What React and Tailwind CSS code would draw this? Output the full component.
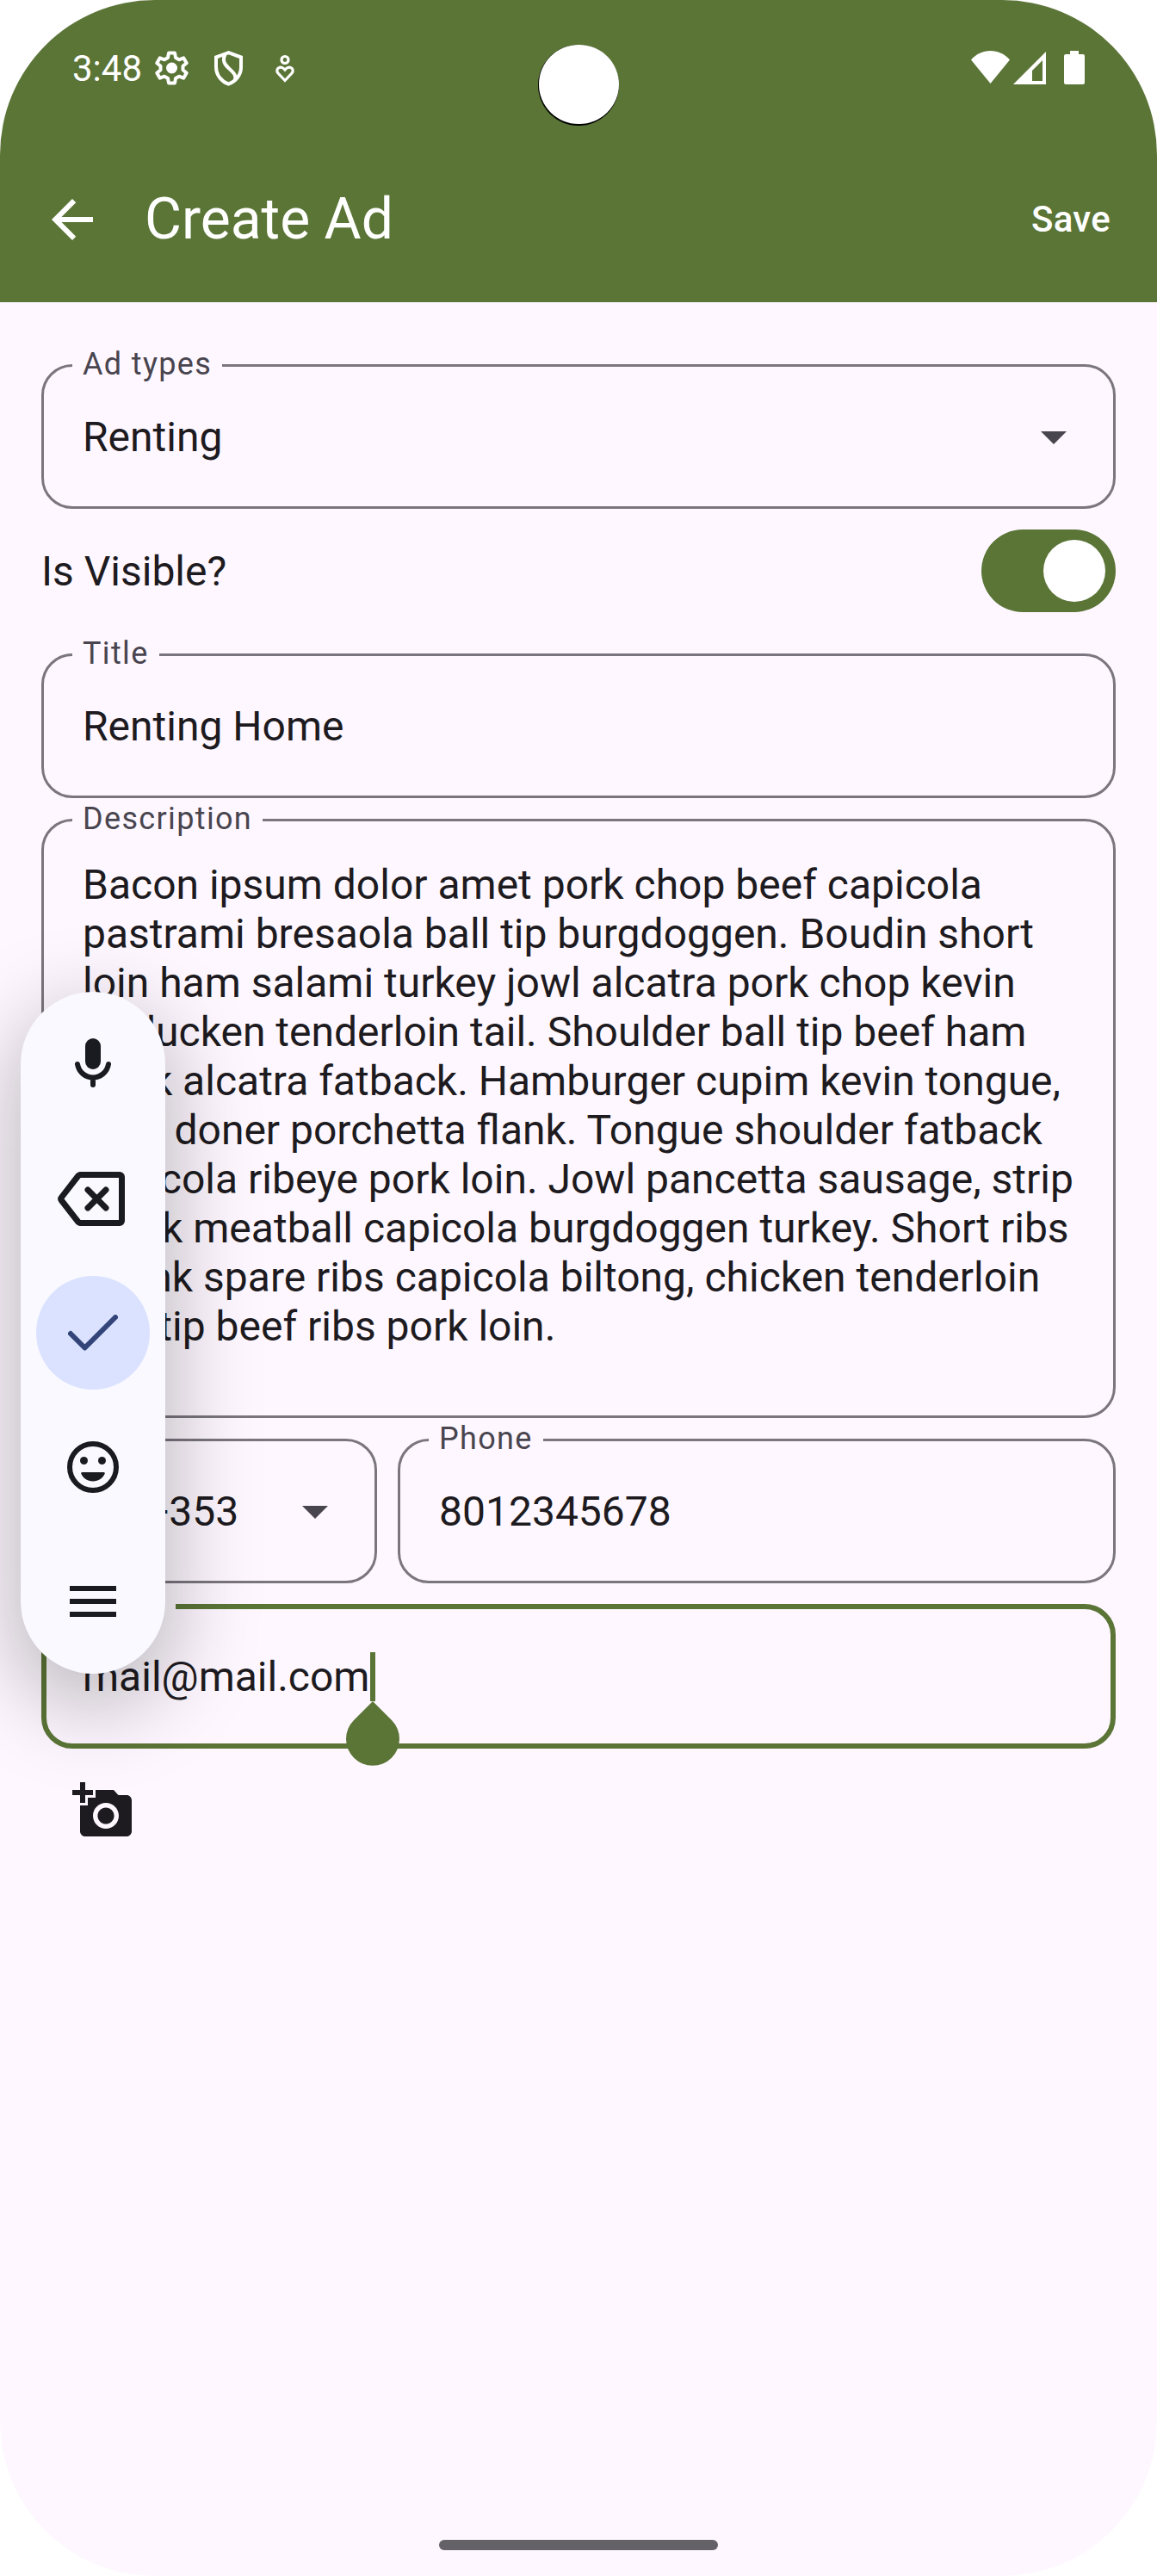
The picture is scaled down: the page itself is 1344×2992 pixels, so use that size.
import React from "react";

const DESCRIPTION = [
  "Bacon ipsum dolor amet pork chop beef capicola",
  "pastrami bresaola ball tip burgdoggen. Boudin short",
  "loin ham salami turkey jowl alcatra pork chop kevin",
  "turducken tenderloin tail. Shoulder ball tip beef ham",
  "flank alcatra fatback. Hamburger cupim kevin tongue,",
  "beef doner porchetta flank. Tongue shoulder fatback",
  "capicola ribeye pork loin. Jowl pancetta sausage, strip",
  "steak meatball capicola burgdoggen turkey. Short ribs",
  "shank spare ribs capicola biltong, chicken tenderloin",
  "ball tip beef ribs pork loin.",
];

function Icon({ className = "h-[72px] w-[72px]", children }) {
  return (
    <svg viewBox="0 0 24 24" className={className} fill="currentColor">
      {children}
    </svg>
  );
}

function Field({ label, className = "", focused = false, children }) {
  return (
    <fieldset
      className={
        "box-border min-w-0 rounded-[36px] " +
        (focused ? "border-[6px] border-[#5b7537] pl-[30px] " : "border-[3px] border-[#7a757f] pl-[33px] ") +
        className
      }
    >
      {label && (
        <legend
          className={
            "h-[3px] px-3 text-[36px] leading-[0px] tracking-[1.35px] whitespace-nowrap " +
            (focused ? "text-[#5b7537]" : "text-[#49454f]")
          }
        >
          {label}
        </legend>
      )}
      {children}
    </fieldset>
  );
}

function Arrow() {
  return (
    <span className="text-[#49454f]">
      <Icon>
        <path d="M7 10l5 5 5-5z" />
      </Icon>
    </span>
  );
}

function StatusBar() {
  return (
    <div className="relative flex h-[159px] items-start justify-between pt-[55px] pr-[84px] pl-[84px]">
      <div className="flex items-start">
        <span className="w-[96px] text-[42px] leading-[49px] whitespace-nowrap">3:48</span>
        <svg viewBox="0 0 39 42" className="mt-[4px] h-[42px] w-[39px]" fill="none" stroke="currentColor">
          <path
            d="M16 2.5h7l1 5.5 4 2.3 5.2-2 3.5 6-4.2 3.500v4.400l4.200 3.500-3.500 6-5.200-2-4 2.300-1 5.500h-7l-1-5.500-4-2.300-5.200 2-3.500-6 4.200-3.500v-4.400l-4.200-3.500 3.500-6 5.200 2 4-2.300z"
            strokeWidth="4"
            strokeLinejoin="round"
          />
          <circle cx="19.5" cy="20" r="6.5" fill="currentColor" stroke="none" />
        </svg>
        <svg viewBox="0 0 33 41" className="mt-[4px] ml-[30px] h-[41px] w-[33px]" fill="none" stroke="currentColor">
          <path d="M16.5 2.2L31 7.5V19c0 9-6 16.500-14.500 19.700C8 35.500 2 28 2 19V7.500z" strokeWidth="4" />
          <path d="M12.500 4c-3.500 7-1 11.500 4.500 16.500s9.500 9 6.500 14" strokeWidth="4" />
        </svg>
        <svg viewBox="0 0 24 34" className="mt-[8px] ml-[37px] h-[34px] w-[24px]" fill="none" stroke="currentColor">
          <circle cx="12" cy="6.500" r="4" strokeWidth="3.200" />
          <path d="M12 30.500L4 22c-4-5 3-10 8-4 5-6 12-1 8 4z" strokeWidth="3.200" />
        </svg>
      </div>
      <div className="absolute top-[52px] left-[625px] h-[94px] w-[94px] rounded-full bg-black">
        <div className="mx-auto h-[92px] w-[93px] rounded-full bg-white" />
      </div>
      <div className="flex items-start">
        <svg viewBox="0 0 45 38" className="mt-[4px] h-[38px] w-[45px]" fill="currentColor">
          <path d="M22.500 38L0 10.500C6 3.500 14 0 22.500 0S39 3.500 45 10.500z" />
        </svg>
        <svg viewBox="0 0 38 38" className="mt-[5px] ml-[4px] h-[38px] w-[38px]" fill="currentColor" fillRule="evenodd">
          <path d="M38 0v38H0zM34 10L22 22v12h12z" />
        </svg>
        <svg viewBox="0 0 24 39" className="mt-[4px] ml-[21px] h-[39px] w-[24px]" fill="currentColor">
          <path d="M7 0h10v4h5a2 2 0 0 1 2 2v31a2 2 0 0 1-2 2H2a2 2 0 0 1-2-2V6a2 2 0 0 1 2-2h5z" />
        </svg>
      </div>
    </div>
  );
}

function Toolbar() {
  return (
    <div className="absolute top-[1152px] left-[24px] flex h-[792px] w-[168px] flex-col items-center justify-between rounded-[84px] bg-[#f9f9ff] py-[18px] text-[#1a1b20] shadow-[0_30px_100px_8px_rgba(0,0,0,0.27)]">
      <div className="flex h-[132px] w-[132px] items-center justify-center pb-[3px]">
        <svg viewBox="0 0 42 57" className="h-[57px] w-[42px]" fill="none" stroke="currentColor" strokeWidth="6" strokeLinecap="round">
          <rect x="12" y="0" width="18" height="36" rx="9" fill="currentColor" stroke="none" />
          <path d="M3 30c1.500 9 9 15.500 18 15.500S37.500 39 39 30M21 46v8" />
        </svg>
      </div>
      <div className="flex h-[132px] w-[132px] items-center justify-center pr-[4px]">
        <svg viewBox="0 0 78 63" className="h-[63px] w-[78px]" fill="none" stroke="currentColor" strokeWidth="7" strokeLinecap="round" strokeLinejoin="round">
          <path d="M26 3.500H72a2.500 2.500 0 0 1 2.500 2.500V57a2.500 2.500 0 0 1-2.500 2.500H26a3 3 0 0 1-2-1L4.200 33a2.500 2.500 0 0 1 0-3L24 4.500a3 3 0 0 1 2-1z" />
          <path d="M35 21l21 21M56 21L35 42" />
        </svg>
      </div>
      <div className="flex h-[132px] w-[132px] items-center justify-center rounded-full bg-[#dae2ff] text-[#324478]">
        <svg viewBox="0 0 58 42" className="h-[42px] w-[58px]" fill="none" stroke="currentColor" strokeWidth="6" strokeLinecap="round" strokeLinejoin="round">
          <path d="M3 22l16.500 16.500L55 3" />
        </svg>
      </div>
      <div className="flex h-[132px] w-[132px] items-center justify-center">
        <svg viewBox="0 0 60 60" className="h-[60px] w-[60px]" fill="currentColor">
          <circle cx="30" cy="30" r="27" fill="none" stroke="currentColor" strokeWidth="6" />
          <circle cx="19.500" cy="22.500" r="4.500" />
          <circle cx="40.500" cy="22.500" r="4.500" />
          <path d="M17.500 36h25c1 0 1.600.9 1.200 1.800C41.500 43 36.500 46.500 30 46.500S18.500 43 16.300 37.800c-.4-.9.200-1.800 1.200-1.800z" />
        </svg>
      </div>
      <div className="flex h-[132px] w-[132px] flex-col items-center justify-center gap-[9px]">
        <div className="h-[6px] w-[54px] bg-current" />
        <div className="h-[6px] w-[54px] bg-current" />
        <div className="h-[6px] w-[54px] bg-current" />
      </div>
    </div>
  );
}

export default function App() {
  return (
    <div className="h-[2992px] w-[1344px] bg-white font-[Roboto,sans-serif]">
      <div className="relative flex h-[2992px] w-[1344px] flex-col overflow-hidden rounded-[180px] bg-[#fef7ff] text-[48px] leading-[57px] text-[#1d1b20]">
        <header className="h-[351px] shrink-0 bg-[#5b7537] text-white">
          <StatusBar />
          <div className="flex h-[192px] items-center pr-[54px] pl-[48px]">
            <Icon>
              <path d="M20 11H7.830l5.590-5.590L12 4l-8 8 8 8 1.410-1.410L7.830 13H20v-2z" />
            </Icon>
            <h1 className="ml-[48px] flex-1 text-[66px] leading-[84px]">Create Ad</h1>
            <button className="pb-[2px] text-[42px] font-medium tracking-[0.3px]">Save</button>
          </div>
        </header>

        <main className="flex flex-col px-[48px] pt-[72px]">
          <Field label="Ad types" className="h-[168px]">
            <div className="flex h-[162px] items-center justify-between pr-[33px] pl-3">
              <span>Renting</span>
              <Arrow />
            </div>
          </Field>

          <div className="flex h-[144px] items-center justify-between">
            <span>Is Visible?</span>
            <div className="flex h-[96px] w-[156px] items-center justify-end rounded-full bg-[#5b7537] pr-3">
              <div className="h-[72px] w-[72px] rounded-full bg-white" />
            </div>
          </div>

          <Field label="Title" className="mt-6 h-[168px]">
            <div className="flex h-[162px] items-center pl-3">Renting Home</div>
          </Field>

          <Field label="Description" className="mt-6 h-[696px]">
            <div className="pt-[45px] pl-3 whitespace-nowrap">
              {DESCRIPTION.map((line) => (
                <p key={line}>{line}</p>
              ))}
            </div>
          </Field>

          <div className="mt-6 flex gap-6">
            <Field className="h-[168px] w-[390px]">
              <div className="flex h-[162px] items-center justify-between pr-[33px] pl-[85px]">
                <span>+353</span>
                <Arrow />
              </div>
            </Field>
            <Field label="Phone" className="h-[168px] flex-1">
              <div className="flex h-[162px] items-center pl-3">8012345678</div>
            </Field>
          </div>

          <Field label="Email" focused className="mt-6 h-[168px]">
            <div className="flex h-[156px] items-center pl-3">
              <span className="relative">
                mail@mail.com
                <span className="absolute top-0 left-full ml-px h-[57px] w-[6px] bg-[#5b7537]" />
                <svg viewBox="0 0 62 75" className="absolute top-[57px] left-full ml-[-27px] h-[75px] w-[62px]" fill="#5b7537">
                  <path d="M31 0L53 22A31 31 0 1 1 9 22z" />
                </svg>
              </span>
            </div>
          </Field>

          <div className="mt-[36px] ml-[36px]">
            <Icon>
              <path d="M3 4V1h2v3h3v2H5v3H3V6H0V4h3zm3 6V7h3V4h7l1.830 2H21c1.100 0 2 .9 2 2v12c0 1.100-.9 2-2 2H5c-1.100 0-2-.9-2-2V10h3zm7 9c2.760 0 5-2.240 5-5s-2.240-5-5-5-5 2.240-5 5 2.240 5 5 5zm-3.200-5c0 1.770 1.430 3.200 3.200 3.200s3.200-1.430 3.200-3.200-1.430-3.200-3.200-3.200-3.200 1.430-3.200 3.200z" />
            </Icon>
          </div>
        </main>

        <Toolbar />
        <div className="mx-auto mt-auto mb-[30px] h-[12px] w-[324px] shrink-0 rounded-full bg-[#656267]" />
      </div>
    </div>
  );
}
